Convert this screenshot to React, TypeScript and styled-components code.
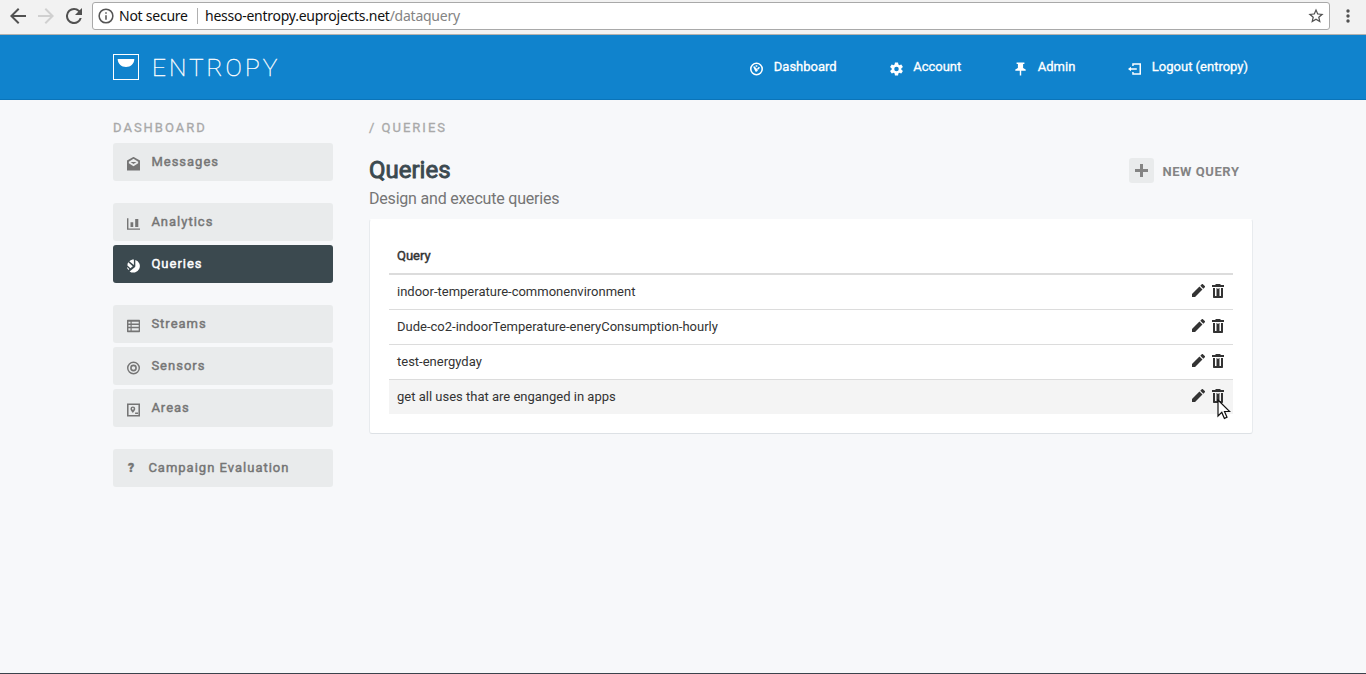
import React from "react";
import styled, { createGlobalStyle, css } from "styled-components";

const Global = createGlobalStyle`
  * { box-sizing: border-box; }
  html, body { margin: 0; padding: 0; }
  body {
    background: #f7f8fa;
    font-family: Roboto, "Liberation Sans", sans-serif;
    font-size: 13px;
    color: #333;
    overflow: hidden;
  }
`;

/* Regular letter widths with thickened strokes */
const heavy = css`
  -webkit-text-stroke: 0.45px currentColor;
`;

const Page = styled.div`
  height: 674px;
  display: flex;
  flex-direction: column;
  border-bottom: 1px solid #3b434c;
`;

const BrowserBar = styled.div`
  flex: none;
  height: 35px;
  display: flex;
  align-items: flex-start;
  background: #f2f2f2;
  border-bottom: 1px solid #b3b1ae;
  padding: 2px 9px 0 10px;
  font-family: "Noto Sans", "Open Sans", sans-serif;
  font-size: 14px;
`;

const NavButtons = styled.div`
  display: flex;
  gap: 12px;
  width: 82px;
  padding-top: 6px;
`;

const AddressBar = styled.div`
  display: flex;
  align-items: center;
  width: 1238px;
  height: 28px;
  padding: 0 5px;
  background: #fff;
  border: 1px solid #a9a9a9;
  border-radius: 3px;
`;

const Security = styled.span`
  width: 78px;
  margin-left: 5px;
  line-height: 18px;
  padding-bottom: 1px;
  color: #111;
  white-space: nowrap;
  letter-spacing: -0.25px;
`;

const Divider = styled.span`
  width: 1px;
  height: 16px;
  background: #b0b0b0;
  margin-right: 7px;
`;

const Address = styled.span`
  flex: 1;
  line-height: 18px;
  padding-bottom: 1px;
  color: #111;
  white-space: nowrap;
  letter-spacing: -0.25px;
`;

const AddressPath = styled.span`
  color: #848484;
`;

const BrowserMenu = styled.div`
  flex: 1;
  display: flex;
  justify-content: center;
  padding: 7px 0 0 8px;
`;

const Header = styled.header`
  flex: none;
  height: 65px;
  padding: 0 113px;
  background: #1083cd;
  border-bottom: 1px solid #0a74b9;
  color: #fff;
  display: flex;
  justify-content: space-between;
`;

const Brand = styled.div`
  display: flex;
  gap: 13px;
  padding-top: 18px;
`;

const BrandName = styled.span`
  font-weight: 100;
  font-size: 24.5px;
  line-height: 30px;
  letter-spacing: 3px;
  -webkit-text-stroke: 0.35px currentColor;
`;

const TopNav = styled.nav`
  display: flex;
  padding: 24px 5px 0 0;
  gap: 53px;
`;

const TopLink = styled.a`
  display: flex;
  gap: 10.5px;
  line-height: 15px;
  -webkit-text-stroke: 0.3px currentColor;
  white-space: nowrap;
  svg { margin-top: 3px; }
`;

const Body = styled.div`
  flex: 1;
  display: flex;
  gap: 36px;
  padding: 20px 113px 0;
`;

const Sidebar = styled.aside`
  width: 220px;
`;

const Crumb = styled.div`
  height: 23px;
  line-height: 15px;
  letter-spacing: 2px;
  color: #a9a9a9;
  -webkit-text-stroke: 0.3px currentColor;
`;

const Group = styled.div`
  display: flex;
  flex-direction: column;
  gap: 4px;
  margin-bottom: 22px;
`;

const Item = styled.a<{ $active?: boolean }>`
  display: flex;
  height: 38px;
  padding: 11px 14px;
  gap: 11.4px;
  border-radius: 3px;
  line-height: 15px;
  letter-spacing: 1px;
  background: ${(p) => (p.$active ? "#3b494f" : "#e9ebec")};
  color: ${(p) => (p.$active ? "#fff" : "#757575")};
  ${heavy}
  svg { margin-top: 3px; }
`;

const Question = styled.span`
  width: 10px;
  padding: 1px 0 0 1px;
  font-weight: 900;
  font-size: 12px;
`;

const Main = styled.main`
  width: 884px;
`;

const TitleRow = styled.div`
  display: flex;
  justify-content: space-between;
  height: 76px;
  padding: 12px 13.5px 0 0;
`;

const Title = styled.h1`
  margin: 0;
  font-size: 24px;
  line-height: 30px;
  font-weight: 400;
  color: #3b494f;
  -webkit-text-stroke: 0.9px currentColor;
`;

const Subtitle = styled.p`
  margin: 4px 0 0;
  font-size: 16px;
  line-height: 20px;
  letter-spacing: -0.2px;
  color: #757575;
`;

const NewQuery = styled.a`
  display: flex;
  align-items: center;
  gap: 8.5px;
  height: 25px;
  margin-top: 3px;
  color: #848484;
  font-weight: 700;
  letter-spacing: 0.55px;
  line-height: 15px;
`;

const NewQueryText = styled.span`
  padding-top: 2px;
`;

const PlusBox = styled.span`
  width: 25px;
  height: 25px;
  display: flex;
  align-items: center;
  justify-content: center;
  background: #e9ebec;
  border-radius: 3px;
`;

const Card = styled.section`
  height: 215px;
  padding: 19px;
  background: #fff;
  border: 1px solid #e8ebee;
  border-top-color: #fff;
  border-bottom-color: #dde1e5;
  border-radius: 3px;
`;

const HeadRow = styled.div`
  height: 36px;
  padding: 9px 8px;
  line-height: 15px;
  border-bottom: 2px solid #dcdcdc;
  ${heavy}
`;

const Row = styled.div<{ $hover?: boolean }>`
  display: flex;
  justify-content: space-between;
  height: ${(p) => (p.$hover ? "34px" : "35px")};
  padding: 9px 9px 0 8px;
  line-height: 15px;
  border-bottom: ${(p) => (p.$hover ? "0" : "1px solid #dcdcdc")};
  background: ${(p) => (p.$hover ? "#f4f4f4" : "transparent")};
`;

const Actions = styled.span`
  display: flex;
  gap: 7px;
  position: relative;
`;

const Pointer = styled.svg`
  position: absolute;
  left: 25px;
  top: 10px;
`;

type IconProps = { d: string; box?: string; w?: number; h?: number };
const Icon = ({ d, box = "0 0 24 24", w = 14, h = 14 }: IconProps) => (
  <svg width={w} height={h} viewBox={box} fill="currentColor" fillRule="evenodd">
    <path d={d} />
  </svg>
);

const icons = {
  back: "M20 11H7.83l5.59-5.59L12 4l-8 8 8 8 1.41-1.41L7.83 13H20v-2z",
  forward: "M12 4l-1.41 1.41L16.17 11H4v2h12.17l-5.58 5.59L12 20l8-8z",
  reload:
    "M17.65 6.35A7.96 7.96 0 0 0 12 4a8 8 0 1 0 7.73 10h-2.08A6 6 0 1 1 12 6c1.66 0 3.14.69 4.22 1.78L13 11h7V4l-2.35 2.35z",
  info: "M11 17h2v-6h-2v6zm1-15a10 10 0 1 0 0 20 10 10 0 0 0 0-20zm0 18a8 8 0 1 1 0-16 8 8 0 0 1 0 16zM11 9h2V7h-2v2z",
  star: "M22 9.24l-7.19-.62L12 2 9.19 8.63 2 9.24l5.46 4.73L5.82 21 12 17.27 18.18 21l-1.63-7.03L22 9.24zM12 15.4l-3.76 2.27 1-4.28-3.32-2.88 4.38-.38L12 6.1l1.71 4.04 4.38.38-3.32 2.88 1 4.28L12 15.4z",
  gear: "M19.43 12.98c.04-.32.07-.64.07-.98s-.03-.66-.07-.98l2.11-1.65c.19-.15.24-.42.12-.64l-2-3.46c-.12-.22-.39-.3-.61-.22l-2.49 1c-.52-.4-1.08-.73-1.69-.98l-.38-2.65A.49.49 0 0 0 14 2h-4c-.25 0-.46.18-.49.42l-.38 2.65c-.61.25-1.17.59-1.69.98l-2.49-1c-.23-.09-.49 0-.61.22l-2 3.46c-.13.22-.07.49.12.64l2.11 1.65c-.04.32-.07.65-.07.98s.03.66.07.98l-2.11 1.65c-.19.15-.24.42-.12.64l2 3.46c.12.22.39.3.61.22l2.49-1c.52.4 1.08.73 1.69.98l.38 2.65c.03.24.24.42.49.42h4c.25 0 .46-.18.49-.42l.38-2.65c.61-.25 1.17-.59 1.69-.98l2.49 1c.23.09.49 0 .61-.22l2-3.46c.12-.22.07-.49-.12-.64l-2.11-1.65zM12 15.5a3.5 3.5 0 1 1 0-7 3.5 3.5 0 0 1 0 7z",
  dash: "M12 2a10 10 0 1 0 0 20 10 10 0 0 0 0-20zm0 2.4a7.6 7.6 0 1 1 0 15.2 7.6 7.6 0 0 1 0-15.2zM10.6 6.2h2.6v2.4h-2.6zM6.8 8.4l2-.6 5 5.4c1 1.6-1.8 4.2-3.4 2.6zM15.5 8.6l1.9 1.6-3 3-1.6-1.4z",
  pin: "M6 2h12v2.2h-2v6.3l4 2.2v2h-6.9V22h-2.2v-7.3H4v-2l4-2.2V4.2H6z",
  logout: "M8.5 3H22v18H8.5v-4.5h2.2v2.2h9V5.3h-9v2.2H8.5V3zM6.5 8.5v2.4h9v2.2h-9v2.4L2 12z",
  mail: "M12 1l10 5.8V22H2V6.8L12 1zM12 4L4.8 8.6v2.2L12 15.4l7.2-4.6V8.6L12 4zM7.4 9h9.2L12 12z",
  chart: "M2 3h2.2v15.8H22V21H2V3zm5.4 6.4h4.2v7.4H7.4V9.4zm7.2-5h4.8v12.4h-4.8V4.4z",
  pie: "M14.8 2.6A10 10 0 1 1 6 20.3l8-6.4c.6-.5.8-1 .8-1.8V2.6zM12.6 2v8.6L5.6 4.6C7.3 2.9 9.8 2 12.6 2zM3.9 6.4l7 6-3.6 3-4.600-4.200C2.500 9.500 3 7.800 3.900 6.400zM2 13.400l3.600 3.400-1.200 1.200C3 16.800 2.100 15.200 2 13.400z",
  table:
    "M3 2.5h18a1 1 0 0 1 1 1v17a1 1 0 0 1-1 1H3a1 1 0 0 1-1-1v-17a1 1 0 0 1 1-1zm1.2 2.8v2.8h3.2V5.3zm5 0v2.8H20V5.3zm-5 5v3h3.2v-3zm5 0v3H20v-3zm-5 5.2v3.3h3.2v-3.3zm5 0v3.3H20v-3.3z",
  target:
    "M12 2a10 10 0 1 0 0 20 10 10 0 0 0 0-20zm0 2.2a7.8 7.8 0 1 1 0 15.6 7.8 7.8 0 0 1 0-15.6zM12 6.8a5.2 5.2 0 1 0 0 10.4 5.2 5.2 0 0 0 0-10.4zm0 2.4a2.8 2.8 0 1 1 0 5.6 2.8 2.8 0 0 1 0-5.6z",
  area: "M2 2h20v20H2V2zm2.4 2.4v15.2h15.2V4.4H4.4zM11 6.5a3.7 3.7 0 0 1 3.7 3.7c0 2.8-3.7 6.3-3.7 6.3s-3.7-3.5-3.7-6.3A3.7 3.7 0 0 1 11 6.5zm0 2.2a1.4 1.4 0 1 0 0 2.8 1.4 1.4 0 0 0 0-2.8zM14.5 16h4.500v2h-4.500z",
  pencil:
    "M3 16.8V21h4.2L17.5 10.7l-4.2-4.2L3 16.8zM20.7 7.5a1.1 1.1 0 0 0 0-1.6l-2.6-2.6a1.1 1.1 0 0 0-1.6 0l-2 2 4.2 4.2 2-2z",
  trash: "M4 0h4l1 1h3v2H0V1h3zM1 4h10v9c0 .6-.4 1-1 1H2c-.6 0-1-.4-1-1zM3 4v8h1.500V4zM7.500 4v8H9V4zM5.400 4v1h1.200V4z",
};

const tight = "2 2 20 20";

const queries = [
  "indoor-temperature-commonenvironment",
  "Dude-co2-indoorTemperature-eneryConsumption-hourly",
  "test-energyday",
  "get all uses that are enganged in apps",
];

export default function App() {
  return (
    <Page>
      <Global />
      <BrowserBar>
        <NavButtons>
          <svg width="16" height="16" viewBox="4 4 16 16" fill="#515151"><path d={icons.back} /></svg>
          <svg width="16" height="16" viewBox="4 4 16 16" fill="#d0d0d0"><path d={icons.forward} /></svg>
          <svg width="16" height="16" viewBox="4 4 16 16" fill="#515151"><path d={icons.reload} /></svg>
        </NavButtons>
        <AddressBar>
          <svg width="16" height="16" viewBox="1.5 1.5 21 21" fill="#555"><path d={icons.info} /></svg>
          <Security>Not secure</Security>
          <Divider />
          <Address>
            hesso-entropy.euprojects.net<AddressPath>/dataquery</AddressPath>
          </Address>
          <svg width="16" height="16" viewBox="1.5 1.5 21 21" fill="#515151"><path d={icons.star} /></svg>
        </AddressBar>
        <BrowserMenu>
          <svg width="4" height="14" viewBox="0 0 4 14" fill="#515151">
            <circle cx="2" cy="2" r="1.7" /><circle cx="2" cy="7" r="1.7" /><circle cx="2" cy="12" r="1.7" />
          </svg>
        </BrowserMenu>
      </BrowserBar>

      <Header>
        <Brand>
          <svg width="26" height="27" viewBox="0 0 26 27">
            <rect x="0.5" y="1.5" width="25" height="25" fill="none" stroke="#fff" />
            <path d="M4.7 6h16.6c0 4.6-3.6 8-8.3 8s-8.3-3.4-8.3-8z" fill="#fff" />
          </svg>
          <BrandName>ENTROPY</BrandName>
        </Brand>
        <TopNav>
          <TopLink><Icon d={icons.dash} box={tight} w={13} />Dashboard</TopLink>
          <TopLink><Icon d={icons.gear} box={tight} w={13} />Account</TopLink>
          <TopLink><Icon d={icons.pin} box={tight} w={13} />Admin</TopLink>
          <TopLink><Icon d={icons.logout} box={tight} w={13} />Logout (entropy)</TopLink>
        </TopNav>
      </Header>

      <Body>
        <Sidebar>
          <Crumb>DASHBOARD</Crumb>
          <Group>
            <Item><Icon d={icons.mail} box={tight} w={13} />Messages</Item>
          </Group>
          <Group>
            <Item><Icon d={icons.chart} box={tight} w={13} />Analytics</Item>
            <Item $active><Icon d={icons.pie} box={tight} w={13} />Queries</Item>
          </Group>
          <Group>
            <Item><Icon d={icons.table} box={tight} w={13} />Streams</Item>
            <Item><Icon d={icons.target} box={tight} w={13} />Sensors</Item>
            <Item><Icon d={icons.area} box={tight} w={13} />Areas</Item>
          </Group>
          <Group>
            <Item><Question>?</Question>Campaign Evaluation</Item>
          </Group>
        </Sidebar>

        <Main>
          <Crumb>/ QUERIES</Crumb>
          <TitleRow>
            <div>
              <Title>Queries</Title>
              <Subtitle>Design and execute queries</Subtitle>
            </div>
            <NewQuery>
              <PlusBox>
                <svg width="13" height="13" viewBox="0 0 13 13" fill="currentColor">
                  <path d="M5 0h3v5h5v3H8v5H5V8H0V5h5z" />
                </svg>
              </PlusBox>
              <NewQueryText>NEW QUERY</NewQueryText>
            </NewQuery>
          </TitleRow>
          <Card>
            <HeadRow>Query</HeadRow>
            {queries.map((q, i) => {
              const last = i === queries.length - 1;
              return (
                <Row key={q} $hover={last}>
                  {q}
                  <Actions>
                    <Icon d={icons.pencil} box="3 3 18 18" w={13} h={13} />
                    <Icon d={icons.trash} box="0 0 12 14" w={12} h={14} />
                    {last && (
                      <Pointer width="14" height="21" viewBox="0 0 14 21">
                        <path
                          d="M1 1v16l3.8-3.6 2.6 6 2.6-1.1-2.5-5.8h5.2z"
                          fill="#fff" stroke="#111" strokeWidth="1.2"
                        />
                      </Pointer>
                    )}
                  </Actions>
                </Row>
              );
            })}
          </Card>
        </Main>
      </Body>
    </Page>
  );
}
